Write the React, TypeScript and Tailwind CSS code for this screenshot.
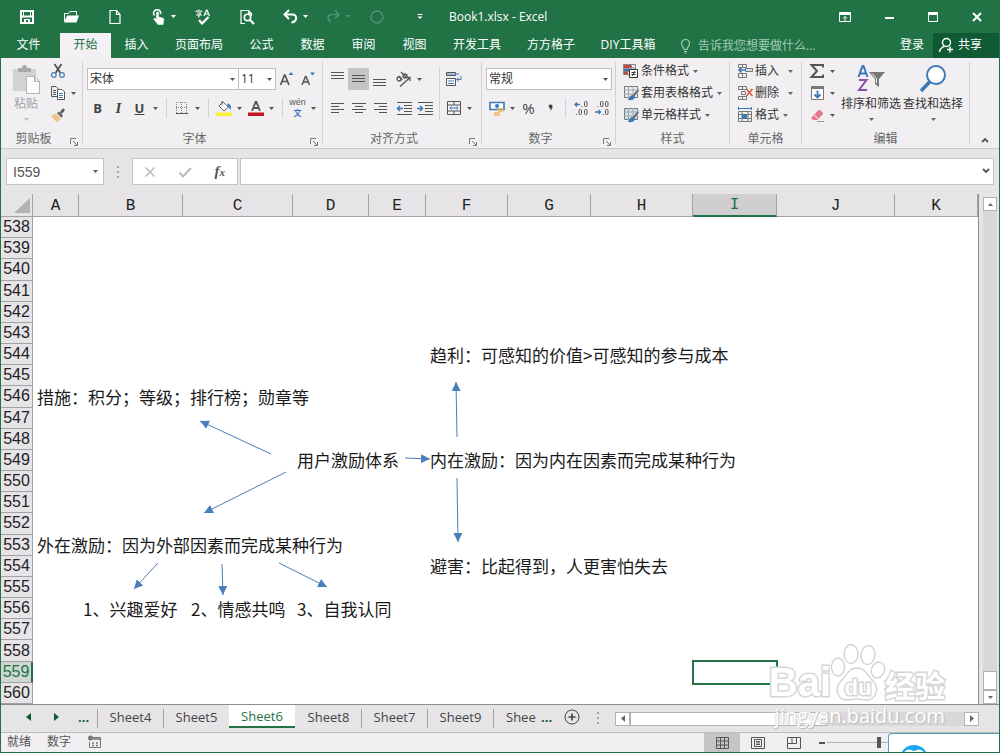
import React from 'react';
import clsx from 'clsx';

interface Column {
  name: string;
  width: string;
}

const columns: Column[] = [
  { name: 'A', width: 'w-[46px]' },
  { name: 'B', width: 'w-[104px]' },
  { name: 'C', width: 'w-[110px]' },
  { name: 'D', width: 'w-[76px]' },
  { name: 'E', width: 'w-[57px]' },
  { name: 'F', width: 'w-[82px]' },
  { name: 'G', width: 'w-[83px]' },
  { name: 'H', width: 'w-[102px]' },
  { name: 'I', width: 'w-[84px]' },
  { name: 'J', width: 'w-[118px]' },
  { name: 'K', width: 'w-auto' },
];

const rows = Array.from({ length: 23 }, (_, i) => 538 + i);

const cells: Record<string, string> = {
  F544: '趋利：可感知的价值>可感知的参与成本',
  A546: '措施：积分；等级；排行榜；勋章等',
  D549: '用户激励体系',
  F549: '内在激励：因为内在因素而完成某种行为',
  A553: '外在激励：因为外部因素而完成某种行为',
  F554: '避害：比起得到，人更害怕失去',
  B556: '1、兴趣爱好',
  C556: '2、情感共鸣',
  D556: '3、自我认同',
};

// start x, start y, tip x, tip y
const arrows = [
  [271, 454, 200, 421],
  [286, 472, 204, 513],
  [158, 563, 134, 589],
  [222, 564, 223, 595],
  [279, 563, 327, 587],
  [405, 458, 430, 459],
  [457, 437, 456, 382],
  [457, 478, 458, 542],
];

const menuTabs = [
  { label: '开始', width: 'w-[51px]', active: true },
  { label: '插入', width: 'w-[51px]' },
  { label: '页面布局', width: 'w-[74px]' },
  { label: '公式', width: 'w-[51px]' },
  { label: '数据', width: 'w-[51px]' },
  { label: '审阅', width: 'w-[51px]' },
  { label: '视图', width: 'w-[51px]' },
  { label: '开发工具', width: 'w-[74px]' },
  { label: '方方格子', width: 'w-[74px]' },
  { label: 'DIY工具箱', width: 'w-[80px]' },
];

const sheets = ['Sheet4', 'Sheet5', 'Sheet6', 'Sheet8', 'Sheet7', 'Sheet9'];

function Caret({ className }: { className?: string }) {
  return (
    <svg className={clsx('shrink-0', className)} width="5" height="3" viewBox="0 0 5 3" fill="currentColor">
      <path d="M0 0h5L2.5 3z" />
    </svg>
  );
}

function Icon({ children, size = 16 }: { children: React.ReactNode; size?: number }) {
  return (
    <svg className="shrink-0" width={size} height={size} viewBox={`0 0 ${size} ${size}`} fill="none" stroke="currentColor">
      {children}
    </svg>
  );
}

function Slot({ label, active, children }: { label: string; active?: boolean; children: React.ReactNode }) {
  return (
    <button
      type="button"
      aria-label={label}
      className={clsx('flex h-[22px] w-[21px] items-center justify-center', active && 'bg-[#c6c4c7]')}
    >
      {children}
    </button>
  );
}

function CaretSlot({ label }: { label: string }) {
  return (
    <button type="button" aria-label={label} className="flex h-[22px] w-[11px] items-center justify-center">
      <Caret />
    </button>
  );
}

function Divider() {
  return <div className="ml-[5px] mr-1 h-5 w-px bg-[#d2d0d3]" />;
}

interface GroupProps {
  label: string;
  width: string;
  launcher?: boolean;
  children: React.ReactNode;
}

function Group({ label, width, launcher, children }: GroupProps) {
  return (
    <section className={clsx('flex shrink-0 flex-col', width)}>
      <div className="flex flex-1">
        <div className="flex flex-1 flex-col">
          <div className="flex-1">{children}</div>
          <div className="flex h-[18px] items-center">
            <span className="flex-1 text-center text-[#666]">{label}</span>
            {launcher && (
              <button type="button" aria-label={`${label}设置`} className="flex h-full w-4 items-end pb-0.5 pl-1 text-[#777]">
                <Icon size={8}>
                  <path d="M.5 6V.5H6M3 3l4 4M7.500 4v3.500H4" />
                </Icon>
              </button>
            )}
          </div>
        </div>
        <div className="my-1 w-px bg-[#d2d0d3]" />
      </div>
    </section>
  );
}

function Picker({ label, value, width }: { label: string; value: string; width: string }) {
  return (
    <div className={clsx('relative', width)}>
      <select
        aria-label={label}
        defaultValue={value}
        className="h-[22px] w-full appearance-none border border-[#c0bec1] bg-white pl-0.5 text-xs text-[#333] outline-none"
      >
        <option>{value}</option>
      </select>
      <Caret className="pointer-events-none absolute right-1 top-[10px]" />
    </div>
  );
}

function RibbonRow({ label, children, wide }: { label: string; children: React.ReactNode; wide?: boolean }) {
  return (
    <button type="button" className="flex h-[22px] items-center whitespace-nowrap text-[#333]">
      {children}
      <span className="ml-0.5">{label}</span>
      <Caret className={wide ? 'ml-[9px] text-[#666]' : 'ml-1 text-[#666]'} />
    </button>
  );
}

function Lines({ widths, top, align }: { widths: number[]; top: number; align: 'l' | 'c' | 'r' }) {
  const d = widths
    .map((w, i) => {
      const x = align === 'l' ? 1 : align === 'c' ? 1 + (14 - w) / 2 : 15 - w;
      return `M${x} ${top + i * 3 + 0.5}h${w}`;
    })
    .join('');
  return (
    <Icon>
      <path d={d} />
    </Icon>
  );
}

function GridBrush({ fill }: { fill: string }) {
  return (
    <Icon>
      <path d="M1.500 1.500h13v11h-13z" fill={fill} stroke="#777" />
      <path d="M1 5h14M1 9h14M5.500 1v12M10 1v12" stroke="#a5a5a5" />
      <path d="M15.500 3 9 10.500l2 1.500L16 6z" fill="#666" stroke="#f1eff2" strokeWidth=".5" />
      <path d="M9.500 10c-3 0-2.500 3-5 4.500 3 1.500 7.500.5 7.500-3z" fill="#3b78b5" stroke="none" />
    </Icon>
  );
}

function TitleBar() {
  const quick = 'flex h-[33px] items-center gap-1 pl-[14px]';
  return (
    <div className="flex items-center text-white">
      <div className="flex pl-1">
        <button type="button" aria-label="保存" className={clsx(quick, 'w-11')}>
          <Icon>
            <path d="M2 2h12v12H2z" strokeWidth="2" />
            <path d="M2 7.500h12" strokeWidth="2" />
            <path d="M5 10h6v4H5z" fill="#fff" stroke="none" />
            <path d="M7 11h2v2H7z" fill="#217346" stroke="none" />
            <path d="M4.500 2v5M11.500 2v5" />
          </Icon>
        </button>
        <button type="button" aria-label="打开" className={clsx(quick, 'w-11')}>
          <Icon>
            <path d="M1.500 12V4.500h4l1.500-2h6.500v4" />
            <path d="M1 13.500 4 6.500h12l-2.500 7z" fill="#fff" stroke="none" />
          </Icon>
        </button>
        <button type="button" aria-label="新建" className={clsx(quick, 'w-11')}>
          <Icon>
            <path d="M3 1.500h6.500l3.500 4v9H3zM9.500 1.500v4H13" strokeWidth="1.200" />
          </Icon>
        </button>
        <button type="button" aria-label="触摸模式" className={clsx(quick, 'w-11')}>
          <Icon>
            <path d="M3.500 6.500a3.500 3.500 0 1 1 6-1.500" strokeWidth="1.600" />
            <path d="M5.500 4c0-1.500 2-1.500 2 0v4l4 1c1 .3 1.500 1 1.300 2L12 15.500H7L3 10.500c-.5-1 .7-1.500 1.500-.8l1 .8z" fill="#fff" stroke="#fff" strokeWidth=".6" />
          </Icon>
          <Caret />
        </button>
        <button type="button" aria-label="拼写检查" className={clsx(quick, 'w-11')}>
          <Icon>
            <path d="M1 3V2h6v1M4 .5V2M2 4h4L4 5.500v2.500H3M1 6h6" />
            <path d="m9 7 2.500-6H12l2.500 6M10 5h3.500" strokeWidth="1.200" />
            <path d="m4 11 3 3.500L13.500 8" strokeWidth="2.200" />
          </Icon>
        </button>
        <button type="button" aria-label="打印预览" className={clsx(quick, 'w-11')}>
          <Icon>
            <path d="M6 14.500H2v-13h7.500l3 3V7M9.500 1.500v3h3" strokeWidth="1.200" />
            <circle cx="8.500" cy="8.500" r="3.200" strokeWidth="1.600" />
            <path d="m11 11 4 4" strokeWidth="2.200" />
          </Icon>
        </button>
        <button type="button" aria-label="撤消" className={clsx(quick, 'w-[43px]')}>
          <Icon>
            <path d="M2 5.500h7.500c5 0 5 7-1 8" strokeWidth="2" />
            <path d="M6 1 1.500 5.500 6 10" strokeWidth="2" />
          </Icon>
          <Caret />
        </button>
        <button type="button" aria-label="恢复" disabled className={clsx(quick, 'w-[43px] text-[#4f9470]')}>
          <Icon>
            <path d="M12 5.500H6c-5 0-5 6-1 7" strokeWidth="1.600" />
            <path d="m9 1.500 4 4-4 4" strokeWidth="1.600" />
          </Icon>
          <Caret />
        </button>
        <button type="button" aria-label="录制" disabled className={clsx(quick, 'w-[43px] text-[#4f9470]')}>
          <Icon>
            <circle cx="8" cy="8" r="6" strokeWidth="1.300" />
          </Icon>
        </button>
        <button type="button" aria-label="自定义快速访问工具栏" className={clsx(quick, 'w-[43px]')}>
          <Icon>
            <path d="M5.500 5.500h5" />
            <path d="M5.500 7.500h5L8 10z" fill="#fff" stroke="none" />
          </Icon>
        </button>
      </div>
      <h1 className="flex-1 pl-2">Book1.xlsx - Excel</h1>
      <div className="flex">
        <button type="button" aria-label="功能区显示选项" className="flex h-[33px] w-11 items-center justify-center">
          <Icon>
            <path d="M2.500 3.500h11v9h-11z" />
            <path d="M2 5h12" strokeWidth="2" />
            <path d="M8 12V7.500M6 9.500l2-2 2 2" />
          </Icon>
        </button>
        <button type="button" aria-label="最小化" className="flex h-[33px] w-11 items-center justify-center">
          <Icon>
            <path d="M4 9h9" strokeWidth="2" />
          </Icon>
        </button>
        <button type="button" aria-label="最大化" className="flex h-[33px] w-11 items-center justify-center">
          <Icon>
            <path d="M3.500 3.500h9v9h-9z" />
            <path d="M3 4.500h10" strokeWidth="3" />
          </Icon>
        </button>
        <button type="button" aria-label="关闭" className="flex h-[33px] w-11 items-center justify-center">
          <Icon>
            <path d="m4 4 8 8M12 4l-8 8" strokeWidth="2" />
          </Icon>
        </button>
      </div>
    </div>
  );
}

function MenuBar() {
  return (
    <nav className="flex h-[25px] items-stretch whitespace-nowrap text-white">
      <button type="button" className="w-[59px] pb-0.5 pr-1">文件</button>
      {menuTabs.map((tab) => (
        <button
          key={tab.label}
          type="button"
          className={clsx('shrink-0 pb-0.5', tab.width, tab.active && 'bg-[#f3f1f4] text-[#217346]')}
        >
          {tab.label}
        </button>
      ))}
      <label className="ml-2.5 flex flex-1 items-center gap-1 text-[#a3cdb4]">
        <Icon>
          <path d="M6 11.500C6 9 3.500 8.500 3.500 5.500a4 4 0 0 1 8 0c0 3-2.500 3.500-2.500 6zM6 13.500h3M6.500 15h2" strokeWidth="1.200" />
        </Icon>
        <input
          aria-label="告诉我您想要做什么"
          placeholder="告诉我您想要做什么..."
          className="w-36 bg-transparent outline-none placeholder:text-[#a3cdb4]"
        />
      </label>
      <button type="button" className="px-[9px] pb-0.5">登录</button>
      <button type="button" className="flex w-[66px] items-center gap-1 bg-[#0f5a32] pb-0.5 pl-[5px]">
        <Icon>
          <circle cx="8.500" cy="5.500" r="4" strokeWidth="1.500" />
          <path d="M1.500 15c.5-3 2.500-5 5-5.500M12 9.500v6M9 12.500h6" strokeWidth="1.500" />
        </Icon>
        共享
      </button>
    </nav>
  );
}

function Ribbon() {
  return (
    <div className="flex h-[91px] border-b border-[#c9c7ca] bg-[#f1eff2] text-[#555]">
      <Group label="剪贴板" width="w-[82px]" launcher>
        <div className="flex pt-0.5">
          <button type="button" disabled className="flex w-[46px] flex-col items-center pt-1 pl-1 text-[#a3a1a4]">
            <Icon size={30}>
              <path d="M2 5h23v22H2z" fill="#d3d1d4" stroke="none" />
              <path d="M7 4h4c0-4 5-4 5 0h4v4H7z" fill="#a9a7aa" stroke="none" />
              <path d="M15.500 12.500H24l4.500 5v12h-13zM23.500 12.500v5h5" fill="#fbfafc" stroke="#b5b3b6" />
            </Icon>
            <span className="mt-0.5">粘贴</span>
            <Caret className="mt-1.5 text-[#c0bec1]" />
          </button>
          <div className="flex flex-col">
            <Slot label="剪切">
              <Icon>
                <path d="m4.500 1 6 9M11.500 1l-6 9" stroke="#555" strokeWidth="1.800" />
                <circle cx="3.800" cy="12" r="2.300" stroke="#4a80b5" strokeWidth="1.300" />
                <circle cx="12" cy="12" r="2.300" stroke="#4a80b5" strokeWidth="1.300" />
              </Icon>
            </Slot>
            <div className="flex">
              <Slot label="复制">
                <Icon>
                  <path d="M1.500 1.500H6l2 2v8H1.500zM3 5.500h3M3 7.500h3M3 9.500h3" />
                  <path d="M7.500 4.500h4.500l2.500 2.500v7.500h-7z" fill="#fff" />
                  <path d="M9 8.500h4M9 10.500h4M9 12.500h4" stroke="#4a80b5" />
                </Icon>
              </Slot>
              <CaretSlot label="复制选项" />
            </div>
            <Slot label="格式刷">
              <Icon>
                <path d="m1 9 5-2.500L11 12l-4 3.500z" fill="#f0c384" stroke="none" />
                <path d="m7 6 2-1.500 4 4L11.500 11z" fill="#666" stroke="none" />
                <path d="m11 6 3-4" strokeWidth="2.600" />
              </Icon>
            </Slot>
          </div>
        </div>
      </Group>

      <Group label="字体" width="w-[240px]" launcher>
        <div className="flex flex-col gap-[7px] pl-1 pt-[10px]">
          <div className="flex">
            <Picker label="字体名称" value="宋体" width="w-[152px]" />
            <Picker label="字号" value="11" width="-ml-px w-[38px]" />
            <Slot label="增大字号">
              <Icon>
                <path d="m1.500 14 4-10H6l4 10M3 10.500h5.500" strokeWidth="1.700" />
                <path d="M9.500 4h5L12 1z" fill="#3b78b5" stroke="none" />
              </Icon>
            </Slot>
            <Slot label="减小字号">
              <Icon>
                <path d="m2 14 3.500-8.500H6L9.500 14M3.500 11h5" strokeWidth="1.500" />
                <path d="M10 1.500h5l-2.500 3z" fill="#3b78b5" stroke="none" />
              </Icon>
            </Slot>
          </div>
          <div className="flex items-center">
            <Slot label="加粗"><span className="text-[13px] font-bold text-[#444]">B</span></Slot>
            <Slot label="倾斜">
              <span className="font-['Liberation_Serif',serif] text-[15px] font-bold italic text-[#444]">I</span>
            </Slot>
            <Slot label="下划线"><span className="text-[13px] font-bold text-[#444] underline">U</span></Slot>
            <CaretSlot label="下划线选项" />
            <Divider />
            <Slot label="边框">
              <Icon>
                <path d="M2.500 2v11M7.500 2v11M12.500 2v11M2 2.500h12M2 7.500h12" stroke="#888" strokeDasharray="1 1" />
                <path d="M2 13.500h12" />
              </Icon>
            </Slot>
            <CaretSlot label="边框选项" />
            <Divider />
            <Slot label="填充颜色">
              <Icon>
                <path d="m3 6 4-4 5.500 5L8 11z" fill="#fff" stroke="#666" />
                <path d="M6 1v4" />
                <path d="M11.500 3.500c3 .5 4 2.500 3 6.500-1-2-1.500-3-3-3z" fill="#3b78b5" stroke="none" />
                <path d="M0 12.500h16V16H0z" fill="#fcf03a" stroke="none" />
              </Icon>
            </Slot>
            <CaretSlot label="填充颜色选项" />
            <Slot label="字体颜色">
              <Icon>
                <path d="M4 11 7.600 2h.8L12 11M5.500 8h5" strokeWidth="1.800" />
                <path d="M0 12.500h16V16H0z" fill="#c4161c" stroke="none" />
              </Icon>
            </Slot>
            <CaretSlot label="字体颜色选项" />
            <Divider />
            <Slot label="拼音指南">
              <span className="flex flex-col items-center">
                <span className="font-['Liberation_Sans',sans-serif] text-[9px] leading-[10px]">wén</span>
                <span className="font-['Noto_Sans_CJK_SC',sans-serif] text-[8px] font-bold leading-3 text-[#3b78b5]">文</span>
              </span>
            </Slot>
            <CaretSlot label="拼音选项" />
          </div>
        </div>
      </Group>

      <Group label="对齐方式" width="w-[159px]" launcher>
        <div className="flex pl-1 pt-[10px]">
          <div className="flex flex-col gap-[7px]">
            <div className="flex items-center">
              <Slot label="顶端对齐"><Lines align="l" top={1} widths={[13, 13, 13]} /></Slot>
              <Slot label="垂直居中" active><Lines align="l" top={4} widths={[13, 13, 13]} /></Slot>
              <Slot label="底端对齐"><Lines align="l" top={8} widths={[13, 13, 13]} /></Slot>
              <div className="w-[3px]" />
              <Slot label="方向">
                <svg width="17" height="17" viewBox="0 0 17 17" fill="none" stroke="currentColor">
                  <circle cx="4" cy="8" r="2" strokeWidth="1.300" />
                  <path d="m3.500 5 4 4M6 1l5 5" strokeWidth="1.300" />
                  <circle cx="10" cy="5" r="2" strokeWidth="1.300" />
                  <path d="m5 15.500 10-9M11.500 6.500H15V10" strokeWidth="1.300" />
                </svg>
              </Slot>
              <CaretSlot label="方向选项" />
            </div>
            <div className="flex items-center">
              <Slot label="左对齐"><Lines align="l" top={3} widths={[13, 8, 13, 8]} /></Slot>
              <Slot label="居中"><Lines align="c" top={3} widths={[14, 8, 14, 8]} /></Slot>
              <Slot label="右对齐"><Lines align="r" top={3} widths={[13, 8, 13, 8]} /></Slot>
              <div className="w-[3px]" />
              <Slot label="减少缩进量">
                <Icon>
                  <path d="M1 2.500h15M8 5.500h8M8 8.500h8M8 11.500h8M1 14.500h15" />
                  <path d="M7 8.500H1.500M4 6 1.500 8.500 4 11" stroke="#3b78b5" strokeWidth="1.500" />
                </Icon>
              </Slot>
              <Slot label="增加缩进量">
                <Icon>
                  <path d="M1 2.500h15M8 5.500h8M8 8.500h8M8 11.500h8M1 14.500h15" />
                  <path d="M0 8.500h5.500M3 6l2.500 2.500L3 11" stroke="#3b78b5" strokeWidth="1.500" />
                </Icon>
              </Slot>
            </div>
          </div>
          <div className="ml-1 mr-[3px] h-[52px] w-px bg-[#d2d0d3]" />
          <div className="flex flex-col gap-[7px]">
            <Slot label="自动换行">
              <Icon>
                <path d="M.5 1.500h9v3h-9zM.5 7.500h9v7h-9z" fill="#fff" />
                <path d="M1 3h12" stroke="#3b78b5" />
                <path d="M2 10h6M2 12.500h6" stroke="#3b78b5" />
                <path d="M15 5v3.500h-4M12.500 6.500l-2 2 2 2" stroke="#3b78b5" />
              </Icon>
            </Slot>
            <div className="flex">
              <Slot label="合并后居中">
                <Icon>
                  <path d="M1.500 1.500h13v13h-13zM1.500 5h13M1.500 11h13M8 1.500V5M8 11v3.500" />
                  <path d="M4 8h8M5.500 6.500 4 8l1.500 1.500M10.500 6.500 12 8l-1.500 1.500" stroke="#3b78b5" />
                </Icon>
              </Slot>
              <CaretSlot label="合并选项" />
            </div>
          </div>
        </div>
      </Group>

      <Group label="数字" width="w-[134px]" launcher>
        <div className="flex flex-col gap-[7px] pl-1 pt-[10px]">
          <Picker label="数字格式" value="常规" width="w-[126px]" />
          <div className="flex items-center">
            <Slot label="会计数字格式">
              <Icon>
                <path d="M1 2.500h14v7H1z" fill="#fff" stroke="#3b78b5" strokeWidth="1.600" />
                <circle cx="8" cy="6" r="2" fill="#3b78b5" stroke="none" />
                <path d="M8.500 9h6M8.500 11h6M5 13h6M5 15h6" stroke="#eeb868" strokeWidth="1.500" />
              </Icon>
            </Slot>
            <CaretSlot label="会计格式选项" />
            <Slot label="百分比样式"><span className="text-[15px] text-[#444]">%</span></Slot>
            <Slot label="千位分隔样式">
              <Icon>
                <path d="M8 4.500a2 2 0 0 1 2.500 2c0 2-1 3.500-3 4.500 1-1 1.300-1.700 1.200-2.500C6.500 8.500 6 5 8 4.500z" fill="#444" stroke="none" />
              </Icon>
            </Slot>
            <Divider />
            <Slot label="增加小数位数">
              <Icon>
                <path d="M7 4.500H2M4 2.500l-2 2 2 2" stroke="#3b78b5" strokeWidth="1.300" />
                <rect x="11.500" y="1.500" width="2.500" height="5" rx="1" />
                <path d="M9 7V6M3.500 15v-1" />
                <rect x="6" y="9.500" width="2.500" height="5" rx="1" />
                <rect x="11.500" y="9.500" width="2.500" height="5" rx="1" />
              </Icon>
            </Slot>
            <Slot label="减少小数位数">
              <Icon>
                <rect x="6.500" y="1.500" width="2.500" height="5" rx="1" />
                <rect x="11.500" y="1.500" width="2.500" height="5" rx="1" />
                <path d="M4 7V6M9.500 15v-1" />
                <rect x="11.500" y="9.500" width="2.500" height="5" rx="1" />
                <path d="M1 12h5.500M4.500 10l2 2-2 2" stroke="#3b78b5" strokeWidth="1.300" />
              </Icon>
            </Slot>
          </div>
        </div>
      </Group>

      <Group label="样式" width="w-[114px]">
        <div className="flex flex-col items-start pl-[7px] pt-0.5">
          <RibbonRow label="条件格式">
            <Icon>
              <path d="M.5 1.500h12v10H.5zM.5 5h12M.5 8.500h12M4.500 1.500v10M8.500 1.500v10" stroke="#888" />
              <path d="M1 2h7v3H1zM1 8.500h3.500v3H1z" fill="#c8453c" stroke="none" />
              <path d="M1 5.500h5v2.500H1z" fill="#3b78b5" stroke="none" />
              <path d="M6.500 6.500h8v8h-8z" fill="#fff" />
              <path d="M8.500 9.500h4M8.500 11.500h4M12 8l-3 5" />
            </Icon>
          </RibbonRow>
          <RibbonRow label="套用表格格式">
            <GridBrush fill="#e9eff6" />
          </RibbonRow>
          <RibbonRow label="单元格样式">
            <GridBrush fill="#cfdff0" />
          </RibbonRow>
        </div>
      </Group>

      <Group label="单元格" width="w-[72px]">
        <div className="flex flex-col items-start pl-[7px] pt-0.5">
          <RibbonRow label="插入" wide>
            <Icon>
              <path d="M1.500 1.500h8v3h-8zM5.500 1.500v3M1.500 10.500h8v4h-8zM5.500 10.500v4" stroke="#777" />
              <path d="M8.500 5.500h7v3h-7z" fill="#cfdff0" stroke="#777" />
              <path d="M9 7H2M4.500 4.500 2 7l2.500 2.500" stroke="#3b78b5" strokeWidth="1.500" />
            </Icon>
          </RibbonRow>
          <RibbonRow label="删除" wide>
            <Icon>
              <path d="M1.500 1.500h8v3h-8zM5.500 1.500v3M4.500 6.500h4v3h-4zM1.500 11.500h8v3h-8zM5.500 11.500v3" stroke="#777" />
              <path d="m9.500 4 6 7M15.500 4l-6 7" stroke="#d5593f" strokeWidth="1.500" />
            </Icon>
          </RibbonRow>
          <RibbonRow label="格式">
            <Icon>
              <path d="M1.500 0v3M14.500 0v3M2 1.500h12" stroke="#3b78b5" />
              <path d="M1.500 4.500h13v10h-13zM1.500 7.500h13M1.500 11.500h13M5 4.500v10M11 4.500v10" stroke="#777" />
              <path d="M5 7h5v5H5z" fill="#3b78b5" stroke="none" />
            </Icon>
          </RibbonRow>
        </div>
      </Group>

      <Group label="编辑" width="w-[168px]">
        <div className="flex pl-1 pt-0.5">
          <div className="mr-0.5 flex flex-col">
            <div className="flex">
              <Slot label="自动求和">
                <Icon>
                  <path d="M14 4.500V2H2.500L8 8l-5.500 6H14v-2.500" strokeWidth="2" />
                </Icon>
              </Slot>
              <CaretSlot label="求和选项" />
            </div>
            <div className="flex">
              <Slot label="填充">
                <Icon>
                  <path d="M2.500 1.500h12v13h-12z" fill="#fff" stroke="#777" />
                  <path d="M2 3h13" strokeWidth="2" stroke="#777" />
                  <path d="M8.500 5.500v7M5.500 9.500l3 3 3-3" stroke="#3b78b5" strokeWidth="1.800" />
                </Icon>
              </Slot>
              <CaretSlot label="填充选项" />
            </div>
            <div className="flex">
              <Slot label="清除">
                <Icon>
                  <path d="m2 11 7-7.500c1-1 1.500-1 2.500 0l2 2c.8.800.8 1.300 0 2L8.500 13H4z" fill="#e8788c" stroke="none" />
                  <path d="m5 8 4.500 4" stroke="#fff" />
                  <path d="M8 14.500h7" stroke="#999" />
                </Icon>
              </Slot>
              <CaretSlot label="清除选项" />
            </div>
          </div>
          <button type="button" className="flex w-[62px] flex-col items-center whitespace-nowrap pt-1 text-[#333]">
            <Icon size={30}>
              <path d="m2.500 13 4-11h1l4 11M4 9.500h6" stroke="#3b78b5" strokeWidth="2" />
              <path d="M3 16h7.500L3 26h8" stroke="#8d4fa8" strokeWidth="2" />
              <path d="M13 8h16l-6 7v8l-4-3v-5z" fill="#777" stroke="none" />
              <path d="m16 9.500 4.500 5v4.500" stroke="#f1eff2" />
            </Icon>
            <span className="mt-0.5">排序和筛选</span>
            <Caret className="mt-1.5 text-[#666]" />
          </button>
          <button type="button" className="flex w-[62px] flex-col items-center whitespace-nowrap pt-1 text-[#333]">
            <Icon size={30}>
              <circle cx="18" cy="11" r="9" fill="#fff" stroke="#3b78b5" strokeWidth="2" />
              <path d="m3 27 9-9.500" stroke="#3b78b5" strokeWidth="3.500" />
            </Icon>
            <span className="mt-0.5">查找和选择</span>
            <Caret className="mt-1.5 text-[#666]" />
          </button>
        </div>
      </Group>

      <div className="flex flex-1 items-end justify-end pb-1 pr-2.5">
        <button type="button" aria-label="折叠功能区">
          <Icon size={8}>
            <path d="m1 6 3-3 3 3" strokeWidth="1.800" />
          </Icon>
        </button>
      </div>
    </div>
  );
}

function Dots() {
  return (
    <svg width="2" height="12" viewBox="0 0 2 12" fill="#a5a3a6">
      <path d="M0 0h2v2H0zM0 5h2v2H0zM0 10h2v2H0z" />
    </svg>
  );
}

function FormulaBar() {
  return (
    <div className="flex h-[45px] items-center px-[5px] text-[#555]">
      <div className="relative w-[98px]">
        <input
          aria-label="名称框"
          defaultValue="I559"
          className="h-[27px] w-full border border-[#c5c3c6] bg-white pl-1.5 font-['Liberation_Sans',sans-serif] text-[14px] text-[#555] outline-none"
        />
        <Caret className="pointer-events-none absolute right-1.5 top-3" />
      </div>
      <div className="flex w-7 justify-center">
        <Dots />
      </div>
      <div className="grid h-[27px] w-[106px] grid-cols-3 items-center justify-items-center border border-[#c5c3c6] bg-white">
        <button type="button" aria-label="取消" className="text-[#bbb]">
          <Icon><path d="m3.500 3.500 9 9M12.500 3.500l-9 9" strokeWidth="1.600" /></Icon>
        </button>
        <button type="button" aria-label="输入" className="text-[#bbb]">
          <Icon><path d="m2.500 8.500 3.500 4 8-8.500" strokeWidth="2" /></Icon>
        </button>
        <button
          type="button"
          aria-label="插入函数"
          className="font-['Liberation_Serif',serif] text-[15px] font-bold italic text-[#555]"
        >
          f<span className="text-[11px]">x</span>
        </button>
      </div>
      <div className="relative ml-0.5 flex-1">
        <input aria-label="编辑栏" className="h-[27px] w-full border border-[#c5c3c6] bg-white px-2 pr-5 outline-none" />
        <svg className="pointer-events-none absolute right-1 top-2.5" width="8" height="6" fill="none" stroke="#555">
          <path d="m1 1 3 3 3-3" strokeWidth="1.800" />
        </svg>
      </div>
    </div>
  );
}

function SheetGrid() {
  return (
    <div className="relative flex min-w-0 flex-1 flex-col border-r border-[#8f8d90]">
      <table className="h-full w-full table-fixed border-separate border-spacing-0 bg-white">
        <thead>
          <tr className="h-[23px] bg-[#e6e4e7] font-['Liberation_Mono',monospace] text-[16px] leading-5">
            <th className="w-8 border-b border-r border-[#a3a1a4] p-0">
              <svg className="ml-auto mr-0.5" width="16" height="15" fill="#b3b1b4" aria-label="全选">
                <path d="M16 0v15H0z" />
              </svg>
            </th>
            {columns.map((column) => (
              <th
                key={column.name}
                scope="col"
                className={clsx(
                  'border-r p-0 font-normal',
                  column.width,
                  column.name === 'I'
                    ? 'border-b-2 border-b-[#217346] border-r-[#a3a1a4] bg-[#d0ced1] text-[#217346]'
                    : 'border-b border-[#a3a1a4] pt-px text-[#222]'
                )}
              >
                {column.name}
              </th>
            ))}
          </tr>
        </thead>
        <tbody>
          {rows.map((row) => (
            <tr key={row}>
              <th
                scope="row"
                className={clsx(
                  "border-b p-0 font-['Liberation_Sans',sans-serif] text-[16px] font-normal leading-5",
                  row === 559
                    ? 'border-b-[#a3a1a4] border-r-2 border-r-[#217346] bg-[#d0d6d2] text-[#217346]'
                    : 'border-r border-[#a3a1a4] bg-[#e6e4e7] text-[#222]'
                )}
              >
                {row}
              </th>
              {columns.map((column) => {
                const id = `${column.name}${row}`;
                return (
                  <td
                    key={id}
                    className={clsx(
                      "whitespace-nowrap p-0 font-['Noto_Sans_CJK_SC',sans-serif] text-[17px] leading-5 text-[#1a1a1a]",
                      id === 'C556' ? 'pl-2' : 'pl-1',
                      id === 'I559' && 'relative'
                    )}
                  >
                    {cells[id]}
                    {id === 'I559' && (
                      <div className="absolute -inset-x-px -inset-y-0.5 border-2 border-[#217346]">
                        <div className="absolute -bottom-[3px] -right-[3px] size-[5px] border-l border-t border-white bg-[#217346]" />
                      </div>
                    )}
                  </td>
                );
              })}
            </tr>
          ))}
        </tbody>
      </table>
      <svg
        className="pointer-events-none absolute left-0 top-0"
        width="977"
        height="510"
        viewBox="1 194 977 510"
        stroke="#4a7ebb"
        fill="none"
      >
        <defs>
          <marker id="head" viewBox="0 0 9 9" refX="9" refY="4.500" markerWidth="9" markerHeight="9" markerUnits="userSpaceOnUse" orient="auto">
            <path d="M0 0l9 4.500L0 9z" fill="#4a7ebb" stroke="none" />
          </marker>
        </defs>
        {arrows.map(([x1, y1, x2, y2]) => (
          <line key={`${x1}-${y1}`} x1={x1} y1={y1} x2={x2} y2={y2} markerEnd="url(#head)" />
        ))}
      </svg>
    </div>
  );
}

function VerticalScroll() {
  const button = 'flex h-[14px] shrink-0 items-center justify-center border border-[#b3b1b4] bg-white text-[#666]';
  return (
    <div className="flex w-[20px] flex-col pl-1 pr-0.5 pt-[3px]">
      <button type="button" aria-label="向上滚动" className={button}>
        <Caret className="rotate-180" />
      </button>
      <div className="flex flex-1 flex-col justify-end bg-[#d9d7da]">
        <div className="h-[19px] border border-[#b3b1b4] bg-white" />
      </div>
      <button type="button" aria-label="向下滚动" className={button}>
        <Caret />
      </button>
    </div>
  );
}

function SheetTabs() {
  const arrow = 'flex h-[14px] w-[15px] shrink-0 items-center justify-center border border-[#b3b1b4] bg-white text-[#666]';
  return (
    <div className="flex h-[28px] shrink-0 border-t border-[#8f8d90] text-[13px] text-[#444]">
      <div className="flex w-24 shrink-0 items-center pb-1 text-[#0f5a32]">
        <button type="button" aria-label="上一个" className="ml-[25px] w-7">
          <svg width="5" height="8" fill="currentColor"><path d="M5 0v8L0 4z" /></svg>
        </button>
        <button type="button" aria-label="下一个" className="w-6">
          <svg width="5" height="8" fill="currentColor"><path d="M0 0v8l5-4z" /></svg>
        </button>
        <button type="button" aria-label="更多工作表" className="font-bold">...</button>
      </div>
      {sheets.map((name, i) => (
        <button
          key={name}
          type="button"
          className={clsx(
            'flex w-[66px] shrink-0 items-center justify-center',
            name === 'Sheet6' && 'mb-1 border-b-2 border-[#217346] bg-white text-[#217346]',
            name !== 'Sheet6' && 'my-1 border-l pb-1',
            name !== 'Sheet6' && (i === 3 ? 'border-transparent' : 'border-[#a3a1a4]')
          )}
        >
          {name}
        </button>
      ))}
      <button type="button" className="my-1 flex w-[42px] shrink-0 items-center border-l border-[#a3a1a4] pb-1 pl-3">
        Shee
      </button>
      <button type="button" aria-label="更多工作表" className="ml-1.5 pb-1 font-bold text-[#0f5a32]">...</button>
      <button type="button" aria-label="新工作表" className="ml-3 shrink-0 pb-1">
        <Icon>
          <circle cx="8" cy="8" r="7" />
          <path d="M8 4.500v7M4.500 8h7" strokeWidth="1.600" />
        </Icon>
      </button>
      <div className="flex w-[35px] shrink-0 items-center justify-center pb-0.5">
        <Dots />
      </div>
      <div className="mr-5 flex flex-1 items-center">
        <button type="button" aria-label="向左滚动" className={arrow}>
          <svg width="4" height="7" fill="currentColor"><path d="M4 0v7L0 3.500z" /></svg>
        </button>
        <div className="flex h-[14px] flex-1 bg-[#d9d7da]">
          <div className="w-[59%] border border-[#b3b1b4] bg-white" />
        </div>
        <button type="button" aria-label="向右滚动" className={arrow}>
          <svg width="4" height="7" fill="currentColor"><path d="M0 0v7l4-3.500z" /></svg>
        </button>
      </div>
    </div>
  );
}

function StatusBar() {
  const view = 'flex h-full w-9 items-center justify-center';
  return (
    <footer className="relative flex h-[20px] shrink-0 items-center border-t border-[#bdbbbe] bg-[#f1eff2] text-[#555]">
      <div className="flex flex-1 items-center pb-0.5">
        <span className="ml-1.5">就绪</span>
        <span className="ml-4 mr-4">数字</span>
        <button type="button" aria-label="录制宏">
          <Icon>
            <path d="M6 3.500h7.500v10h-11V8" stroke="#777" />
            <path d="M6 5h7M5 9h2M9 9h2M5 11.500h2M9 11.500h2" stroke="#777" strokeWidth="1.500" />
            <circle cx="3.500" cy="4" r="2.500" fill="#777" stroke="none" />
          </Icon>
        </button>
      </div>
      <div className="flex h-full">
        <button type="button" aria-label="普通" className={clsx(view, 'bg-[#c6c4c7]')}>
          <Icon><path d="M2.500 2.500h12v11h-12zM2.500 6h12M2.500 10h12M6.500 2.500v11M10.500 2.500v11" /></Icon>
        </button>
        <button type="button" aria-label="页面布局视图" className={view}>
          <Icon><path d="M1.500 2.500h13v11h-13zM4.500 4.500h7v7h-7zM6 6.500h4M6 8h4M6 9.500h4" /></Icon>
        </button>
        <button type="button" aria-label="分页预览" className={view}>
          <Icon><path d="M1.500 2.500h13v11h-13zM1.500 8.500h9v-6M6 2.500v6" /></Icon>
        </button>
      </div>
      <button type="button" aria-label="缩小" className="ml-1 flex w-[11px] justify-center">
        <span className="h-0.5 w-1.5 bg-[#555]" />
      </button>
      <input
        type="range"
        aria-label="显示比例"
        defaultValue={50}
        className="mr-[68px] h-3 w-[104px] appearance-none bg-transparent [&::-webkit-slider-runnable-track]:h-px [&::-webkit-slider-runnable-track]:bg-[#b3b1b4] [&::-webkit-slider-thumb]:-mt-[5px] [&::-webkit-slider-thumb]:h-[11px] [&::-webkit-slider-thumb]:w-1 [&::-webkit-slider-thumb]:appearance-none [&::-webkit-slider-thumb]:bg-[#555]"
      />
      {/* notification bubble rising from the taskbar */}
      <div className="absolute -right-px -bottom-px h-[20px] w-[112px] overflow-hidden rounded-tl border-l border-t border-[#4fa3b5] bg-white">
        <svg width="111" height="20" fill="none">
          <circle cx="25" cy="25" r="14" fill="#1ba8ee" />
          <path d="M16 19c2-3 6-3 9 0 3-3 7-3 9 0" stroke="#fff" strokeWidth="2.500" />
          <circle cx="99" cy="19" r="1" fill="#444" />
        </svg>
      </div>
    </footer>
  );
}

function Watermark() {
  const outline = 'text-white [-webkit-text-stroke:3px_#d6d6d6] [paint-order:stroke_fill]';
  return (
    <div className="pointer-events-none absolute bottom-[22px] right-[54px] flex flex-col items-end" aria-hidden="true">
      <div className="flex items-end">
        <span className={clsx("font-['Liberation_Sans',sans-serif] text-[40px] font-bold leading-10", outline)}>Bai</span>
        <div className="relative h-[58px] w-[54px]">
          <svg width="54" height="58" viewBox="0 0 54 58" fill="#fff" stroke="#d0d0d0" strokeWidth="1.300">
            <ellipse cx="7" cy="23" rx="6.500" ry="9" />
            <ellipse cx="20" cy="10" rx="7" ry="9.500" />
            <ellipse cx="37" cy="11" rx="7" ry="9.500" transform="rotate(8 37 11)" />
            <ellipse cx="47" cy="26" rx="6.500" ry="8" transform="rotate(20 47 26)" />
            <path d="M26 24c8 0 10 7 16 13 7 7 3 19-6 19-5 0-6-1-10-1s-5 1-10 1c-10 0-13-12-6-19 6-6 8-13 16-13z" />
          </svg>
          <span
            className={clsx(
              "absolute inset-x-0 bottom-0.5 text-center font-['Liberation_Sans',sans-serif] text-[22px] font-bold leading-6",
              outline
            )}
          >
            du
          </span>
        </div>
        <span className={clsx("font-['Noto_Sans_CJK_SC',sans-serif] text-[30px] font-bold leading-9", outline)}>经验</span>
      </div>
      <span className="text-[20px] leading-7 text-white [text-shadow:1px_1px_1px_#b8b8b8,-1px_0_1px_#ddd]">
        jingyan.baidu.com
      </span>
    </div>
  );
}

export default function App() {
  return (
    <div className="relative flex h-screen min-h-[600px] flex-col overflow-hidden border-x border-b border-[#217346] bg-[#e6e4e7] font-['Open_Sans','Noto_Sans_CJK_SC',sans-serif] text-xs leading-4">
      <header className="bg-[#217346]">
        <TitleBar />
        <MenuBar />
      </header>
      <Ribbon />
      <FormulaBar />
      <main className="flex min-h-0 flex-1">
        <SheetGrid />
        <VerticalScroll />
      </main>
      <SheetTabs />
      <StatusBar />
      <Watermark />
    </div>
  );
}
